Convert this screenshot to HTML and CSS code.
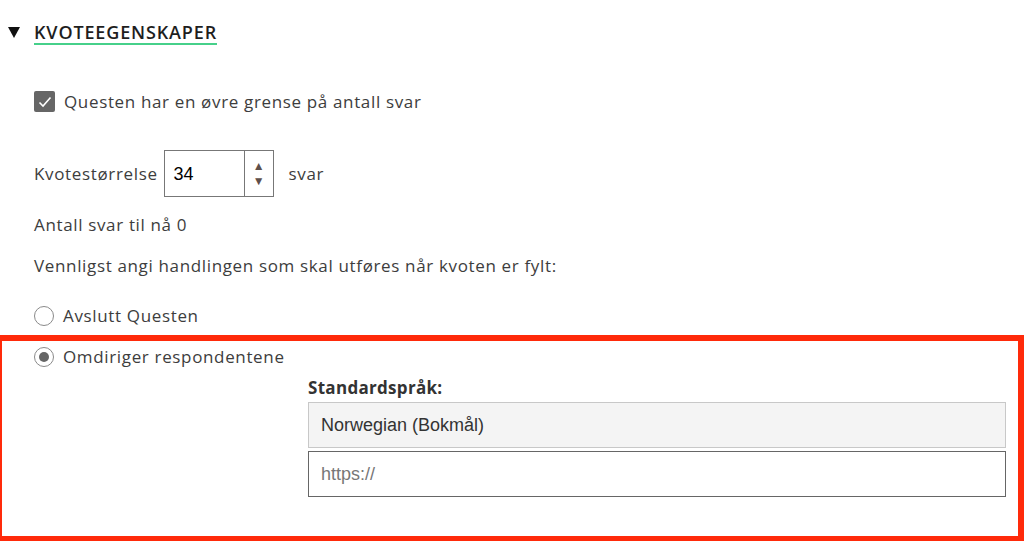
FILE: index.html
```html
<!DOCTYPE html>
<html>
<head>
  <title>Kvoteegenskaper</title>
  <link rel="stylesheet" href="styles.css">
</head>
<body>
  <div class="section-head">
    <svg class="caret" width="12" height="11" viewBox="0 0 12 11"><path d="M0 0 H12 L6 11 Z" fill="#111"/></svg>
    <span class="section-title">KVOTEEGENSKAPER</span>
  </div>

  <div class="section-body">
    <label class="check-row">
      <span class="checkbox">
        <svg width="14" height="12" viewBox="0 0 14 12"><path d="M1.5 6.5 L5 10 L12.5 1.5" fill="none" stroke="#fff" stroke-width="1.6"/></svg>
      </span>
      Questen har en øvre grense på antall svar
    </label>

    <div class="quota-row">
      <span>Kvotestørrelse</span>
      <div class="number-box">
        <span class="number-value">34</span>
        <span class="spinner"><span>&#9650;</span><span>&#9660;</span></span>
      </div>
      <span class="unit">svar</span>
    </div>

    <p class="line count">Antall svar til nå 0</p>
    <p class="line prompt">Vennligst angi handlingen som skal utføres når kvoten er fylt:</p>

    <label class="radio-row first"><span class="radio"></span>Avslutt Questen</label>
  </div>

  <div class="highlight">
    <label class="radio-row"><span class="radio on"></span>Omdiriger respondentene</label>
    <div class="redirect">
      <div class="field-label">Standardspråk:</div>
      <div class="lang-box">Norwegian (Bokmål)</div>
      <div class="url-box">https://</div>
    </div>
  </div>
</body>
</html>
```

FILE: styles.css
```css
body {
    margin: 0;
    background: #fff;
    font-family: "Open Sans", Lato, sans-serif;
    color: #3d3d3d;
    font-size: 17px;
    line-height: 20px;
    letter-spacing: 0.65px;
    overflow: hidden;
}

.section-head {
    display: flex;
    align-items: center;
    gap: 14px;
    padding: 22px 0 0 8px;
}
.caret { margin-top: -2px; }
.section-title {
    font-weight: 600;
    font-size: 18px;
    letter-spacing: 0.85px;
    color: #1e1e1e;
    padding-bottom: 1px;
    border-bottom: 2px solid #46d08a;
}

.section-body { padding: 0 0 0 34px; }

.check-row {
    display: flex;
    align-items: center;
    gap: 9px;
    margin-top: 46px;
}
.checkbox {
    width: 21px;
    height: 21px;
    border-radius: 2px;
    background: #666;
    display: flex;
    align-items: center;
    justify-content: center;
}

.quota-row {
    display: flex;
    align-items: center;
    gap: 6px;
    margin-top: 38px;
}
.number-box {
    box-sizing: border-box;
    width: 110px;
    height: 47px;
    border: 1px solid #777;
    display: flex;
    font-family: "Liberation Sans", Arial, sans-serif;
    letter-spacing: 0;
    color: #000;
}
.number-value {
    flex: 1;
    padding: 13px 0 0 9px;
    font-size: 18px;
    border-right: 1px solid #777;
}
.spinner {
    width: 28px;
    display: flex;
    flex-direction: column;
    align-items: center;
    justify-content: center;
    font-size: 12px;
    color: #5e4f4a;
    line-height: 15px;
}
.unit { margin-left: 9px; }

.line { margin: 0; }
.count { margin-top: 18px; }
.prompt { margin-top: 21px; }

.radio-row {
    display: flex;
    align-items: center;
    gap: 9px;
}
.radio-row.first { margin-top: 30px; }
.radio {
    box-sizing: border-box;
    width: 20px;
    height: 20px;
    border: 1px solid #8a8a8a;
    border-radius: 50%;
    display: flex;
    align-items: center;
    justify-content: center;
}
.radio.on::after {
    content: "";
    width: 10px;
    height: 10px;
    border-radius: 50%;
    background: #666;
}

.highlight {
    box-sizing: border-box;
    margin: 9px 0 0 -4px;
    border: 6px solid #ff2a0a;
    height: 207px;
    padding: 6px 0 0 32px;
}

.redirect {
    margin: 11px 0 0 274px;
    width: 698px;
}
.field-label {
    font-weight: 700;
    color: #333;
    letter-spacing: 0.3px;
    margin-bottom: 4px;
}
.lang-box,
.url-box {
    box-sizing: border-box;
    height: 46px;
    display: flex;
    align-items: center;
    padding-left: 12px;
    font-family: "Liberation Sans", Arial, sans-serif;
    letter-spacing: 0;
    font-size: 18px;
}
.lang-box {
    background: #f4f4f4;
    border: 1px solid #c8c8c8;
    color: #333;
}
.url-box {
    margin-top: 3px;
    border: 1px solid #666;
    color: #777;
}
```
